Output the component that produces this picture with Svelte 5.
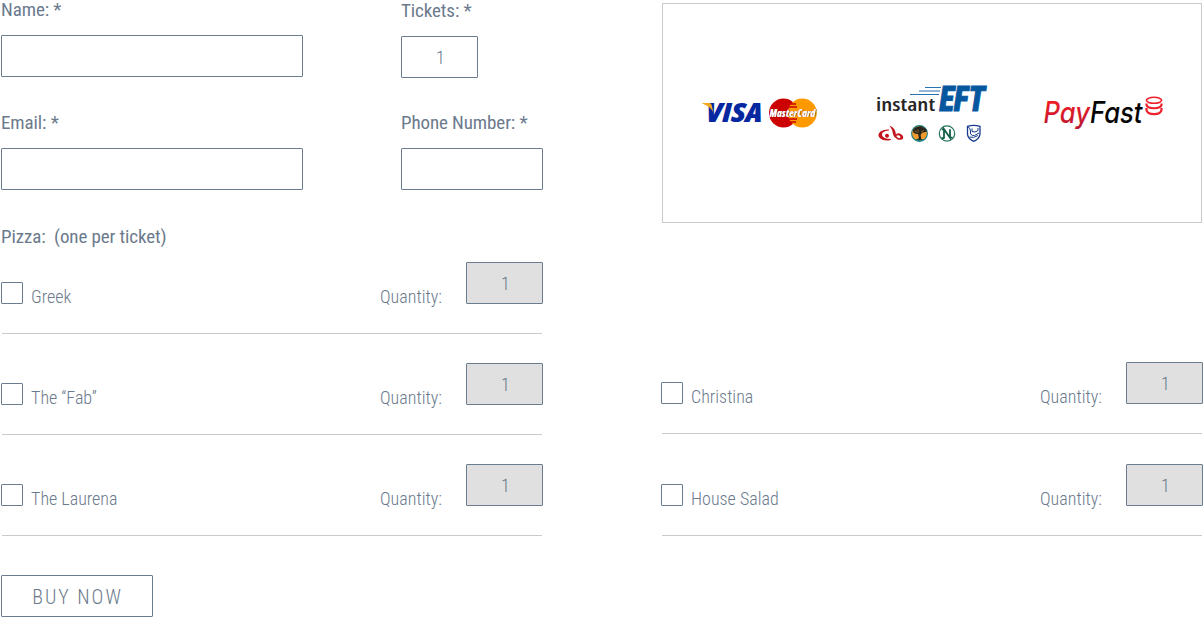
<script>
  const left = ['Greek', 'The “Fab”', 'The Laurena'];
  const right = ['Christina', 'House Salad'];
</script>

{#snippet item(name)}
  <div class="item">
    <div class="line">
      <span class="check" role="checkbox" aria-checked="false" aria-label={name} tabindex="0"></span>
      <span class="name">{name}</span>
      <span class="qty">Quantity:</span>
      <span class="box small off">1</span>
    </div>
    <div class="rule"></div>
  </div>
{/snippet}

<main>
  <section class="left">
    <div class="fields">
      <div class="field"><span class="label">Name: *</span><span class="box wide"></span></div>
      <div class="field low"><span class="label">Tickets: *</span><span class="box small">1</span></div>
      <div class="field"><span class="label">Email: *</span><span class="box wide"></span></div>
      <div class="field"><span class="label">Phone Number: *</span><span class="box phone"></span></div>
    </div>
    <div class="label title">Pizza:&nbsp; (one per ticket)</div>
    <div class="items">
      {#each left as name}{@render item(name)}{/each}
    </div>
    <button>BUY NOW</button>
  </section>

  <section class="right">
    <div class="card">
      <svg class="visa" width="116" height="36" viewBox="702 95 116 36">
        <text x="705.500" y="122" font-family="Open Sans" font-weight="800" font-style="italic" font-size="26" fill="#0527a0" textLength="57" lengthAdjust="spacingAndGlyphs">VISA</text>
        <path d="M702.500 103H709q2.300 0 2.800 2.400l1.500 7.200q-3-6.700-10.800-8.900z" fill="#f6a81c" />
        <circle cx="783.500" cy="113" r="14.500" fill="#c00" />
        <circle cx="802.300" cy="113" r="14.500" fill="#f90" />
        <path d="M789 104h7M788 107h9M788 119h9M789 122h7" stroke="#c00" stroke-width="1.300" />
        <text x="769.500" y="116.500" font-family="Open Sans" font-weight="800" font-style="italic" font-size="10.500" fill="#fff" textLength="46" lengthAdjust="spacingAndGlyphs" class="mc">MasterCard</text>
      </svg>

      <svg class="eft" width="112" height="62" viewBox="876 83 112 62">
        <text x="876" y="110.500" font-family="Open Sans" font-weight="600" font-size="18.500" fill="#252525" textLength="59" lengthAdjust="spacingAndGlyphs">instant</text>
        <text x="939.500" y="110.500" font-family="Roboto" font-weight="900" font-style="italic" font-size="34.500" fill="#07579f" stroke="#07579f" stroke-width="1" textLength="45.500" lengthAdjust="spacingAndGlyphs">EFT</text>
        <path d="M925 87.500h16M919 91h21M910 94.500h29" stroke="#2671af" stroke-width="1.200" />
        <g fill="#c3131c">
          <path d="M889 129.500q-5-.3-8.500 2-4 3.500-.5 6.700 3.500 3.200 10 2l1.500-1.200q-6 .2-8.500-2.200-2.500-2.700.5-4.800 2.200-1.600 5.500-1.500z" />
          <path d="M889.500 125.500q5 2.300 6 6.500l.3 2.600q2.200-2 4.500-.9 3.500 1.900 2.800 4.700-1.500 2.300-5.500 1-3.700-1.700-4.500-5-.5-5-3.600-8.900zm6.700 10.500q1 1.900 3.200 2.200 1.600-.3.800-1.900-1.800-2.100-4-.3z" />
          <circle cx="887" cy="135.800" r="2" />
        </g>
        <circle cx="919.500" cy="133.500" r="7.900" fill="#f19a2d" stroke="#168087" stroke-width="1.100" />
        <path d="M912.800 131q1-3.500 4.200-4 4-1.500 6.500.5 3.500 1 3.300 4.300l-4.800 1-1.400 2.200.6 4 3 1h-9l3.700-1.700-.7-4.100-4.200-1z" fill="#28251d" />
        <path d="M914.500 131l4 1.500M921 132l3-2M917 129.500l2 1.500" stroke="#c98a2b" stroke-width=".6" />
        <path d="M914 138.800q5.500 2.300 11 0-2 2.200-5.500 2.200t-5.500-2.200" fill="#168087" />
        <circle cx="947" cy="133.500" r="7.700" fill="#fff" stroke="#26745e" stroke-width="1.200" />
        <path d="M944 138.200v-9l6 8.500v-8.500M941.800 129.500l2.700-.6M941.500 138.200h3M950 137.700h2.500" fill="none" stroke="#145f49" stroke-width="1.800" />
        <path d="M967.500 126.300q6.200-1.800 12.500 0v8q-.8 4.500-6.200 7-5.700-2.500-6.300-7z" fill="#fff" stroke="#173c8d" stroke-width="1.300" />
        <path d="M967.500 126.500q3 1.500 3 4.500v3q1.500 2 4 1.500l4.500-2.500M972 128.500v3q3 1.500 6-1v-2.500M969.500 137q4 1.500 8.500-1.500" fill="none" stroke="#173c8d" stroke-width="1" />
      </svg>

      <svg class="pay" width="121" height="38" viewBox="1043 94 121 38">
        <defs><linearGradient id="red" gradientUnits="userSpaceOnUse" x1="0" y1="101" x2="0" y2="129"><stop stop-color="#f21c25" /><stop offset="1" stop-color="#b51935" /></linearGradient></defs>
        <text x="1043.500" y="123" font-family="Inter" font-weight="500" font-style="italic" font-size="29.500" fill="url(#red)" textLength="99" lengthAdjust="spacingAndGlyphs">Pay<tspan fill="#050505">Fast</tspan></text>
        <g fill="none" stroke="#ee202b">
          <ellipse cx="1154" cy="100.300" rx="7.600" ry="3" stroke-width="1.600" />
          <path d="M1146.500 103.500v1.500c1 4.300 14 4.300 15 0v-1.500M1146.500 108v2c1 5.500 14 5.500 15 0v-2" stroke-width="2.200" />
        </g>
      </svg>
    </div>
    <div class="items">
      {#each right as name}{@render item(name)}{/each}
    </div>
  </section>
</main>

<style>
  :global(body) { margin: 0; background: #fff; overflow: hidden; }
  main {
    display: flex;
    justify-content: space-between;
    width: 1203px;
    height: 619px;
    color: #6b7a8c;
    font-family: "Roboto Condensed", Roboto, sans-serif;
    font-stretch: 75%;
    font-size: 18px;
    font-weight: 300;
    line-height: 22px;
  }
  .left, .right { width: 542px; }
  .left { margin-left: 1px; }
  .fields {
    display: grid;
    grid-template-columns: 400px 142px;
    grid-template-rows: 113px 113px;
  }
  .field { display: flex; flex-direction: column; align-items: flex-start; gap: 14px; margin-top: -1px; }
  .field.low { margin-top: 0; }
  .label { font-size: 19px; font-weight: 380; letter-spacing: -0.1px; }
  .box {
    box-sizing: border-box;
    height: 42px;
    padding-left: 2px;
    border: 1px solid #6b7c8f;
    border-radius: 1px;
    text-align: center;
    line-height: 41px;
  }
  .wide { width: 302px; }
  .small { width: 77px; }
  .phone { width: 142px; }
  .off { background: #e0e0e0; }
  .title { height: 36px; }
  .items { display: flex; flex-direction: column; gap: 29px; }
  .item { height: 72px; }
  .line { display: grid; grid-template-columns: 30px 349px 86px 77px; align-items: end; height: 42px; }
  .check { box-sizing: border-box; width: 22px; height: 22px; border: 1px solid #6b7c8f; border-radius: 1px; }
  .name, .qty { height: 18px; }
  .rule { height: 1px; margin: 29px 1px 0; background: #c8cacc; }
  button {
    display: block;
    box-sizing: border-box;
    width: 152px;
    height: 42px;
    margin-top: 39px;
    padding: 1px 0 0 1px;
    border: 1px solid #6b7c8f;
    border-radius: 1px;
    background: #fff;
    color: inherit;
    font: inherit;
    font-size: 20px;
    letter-spacing: 2px;
  }
  .card {
    display: flex;
    box-sizing: border-box;
    width: 540px;
    height: 220px;
    margin: 3px 1px 139px;
    padding-left: 39px;
    border: 1px solid #c8cacc;
  }
  .card svg { overflow: visible; }
  .mc { text-shadow: 0.5px 0.5px 0 #631515; }
  .visa { margin-top: 91px; }
  .eft { margin: 79px 0 0 58px; }
  .pay { margin: 90px 0 0 55px; }
  .right .items { gap: 30px; }
</style>
